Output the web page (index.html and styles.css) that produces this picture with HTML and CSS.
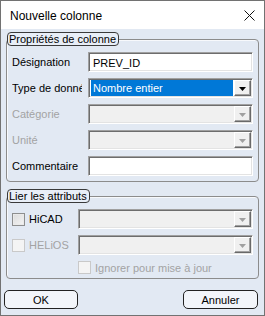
FILE: index.html
```html
<!DOCTYPE html>
<html>
<head>
<meta charset="utf-8">
<link rel="stylesheet" href="styles.css">
</head>
<body>
<div class="window">
  <div class="titlebar">
    <span class="title">Nouvelle colonne</span>
    <svg class="close" width="11" height="11" viewBox="0 0 11 11"><path d="M0.5 0.5L10.5 10.5M10.5 0.5L0.5 10.5" stroke="#111" stroke-width="1" fill="none"/></svg>
  </div>
  <div class="groups">
    <fieldset class="group g1">
      <legend>Propriétés de colonne</legend>
      <div class="rows">
        <div class="row">
          <span class="label">Désignation</span>
          <div class="field"><span class="value">PREV_ID</span></div>
        </div>
        <div class="row">
          <span class="label">Type de données</span>
          <div class="field combo"><span class="sel">Nombre entier</span><span class="dbtn"><svg width="7" height="4" viewBox="0 0 7 4"><path d="M0 0H7L3.5 4Z" fill="#000"/></svg></span></div>
        </div>
        <div class="row">
          <span class="label off">Catégorie</span>
          <div class="field combo off"><span class="sel"></span><span class="dbtn"><svg width="7" height="4" viewBox="0 0 7 4"><path d="M0 0H7L3.5 4Z" fill="#a0a0a0"/></svg></span></div>
        </div>
        <div class="row">
          <span class="label off">Unité</span>
          <div class="field combo off"><span class="sel"></span><span class="dbtn"><svg width="7" height="4" viewBox="0 0 7 4"><path d="M0 0H7L3.5 4Z" fill="#a0a0a0"/></svg></span></div>
        </div>
        <div class="row">
          <span class="label">Commentaire</span>
          <div class="field"><span class="value"></span></div>
        </div>
      </div>
    </fieldset>
    <fieldset class="group g2">
      <legend>Lier les attributs</legend>
      <div class="rows">
        <div class="row">
          <span class="check"><span class="box"></span><span class="ctext">HiCAD</span></span>
          <div class="field combo off"><span class="sel"></span><span class="dbtn"><svg width="7" height="4" viewBox="0 0 7 4"><path d="M0 0H7L3.5 4Z" fill="#a0a0a0"/></svg></span></div>
        </div>
        <div class="row">
          <span class="check off"><span class="box"></span><span class="ctext">HELiOS</span></span>
          <div class="field combo off"><span class="sel"></span><span class="dbtn"><svg width="7" height="4" viewBox="0 0 7 4"><path d="M0 0H7L3.5 4Z" fill="#a0a0a0"/></svg></span></div>
        </div>
        <div class="row small">
          <span class="check off ignore"><span class="box"></span><span class="ctext">Ignorer pour mise à jour</span></span>
        </div>
      </div>
    </fieldset>
  </div>
  <div class="buttons">
    <button class="btn ok">OK</button>
    <button class="btn cancel">Annuler</button>
  </div>
</div>
</body>
</html>
```

FILE: styles.css
```css
* { box-sizing: border-box; }
html, body { margin: 0; padding: 0; }
body {
  width: 265px;
  height: 316px;
  font-family: "Liberation Sans", Arial, sans-serif;
  font-size: 11px;
  color: #000;
  overflow: hidden;
}
.window {
  width: 265px;
  height: 316px;
  border: 1px solid #727272;
  background: #e2e9f3;
  display: flex;
  flex-direction: column;
}
.titlebar {
  height: 28px;
  background: #fff;
  display: flex;
  align-items: center;
  justify-content: space-between;
  padding: 0 9px 0 9px;
}
.title {
  font-size: 12px;
  line-height: 14px;
  padding-top: 1px;
}
.close { display: block; margin-top: 1px; }
.groups {
  padding: 3px 5px 0 5px;
  display: flex;
  flex-direction: column;
}
.group {
  margin: 0;
  padding: 0;
  border: 1px solid #8c8c8c;
  border-radius: 4px;
  box-shadow: inset 1px 1px 0 #f7f9fc;
  min-width: 0;
}
.g2 { margin-top: 7px; }
legend {
  margin: 0;
  padding: 0 2px 0 1px;
  height: 14px;
  line-height: 12px;
  border: 1px solid #3a3a3a;
  border-radius: 4px;
  background: #e8eef7;
  font-size: 11px;
}
.rows {
  display: flex;
  flex-direction: column;
  gap: 6px;
}
.g1 .rows { padding: 6px 5px 5px 5px; }
.g2 .rows { padding: 6px 5px 4px 5px; }
.row {
  display: flex;
  align-items: center;
  height: 20px;
}
.row.small { height: 13px; }
.label {
  width: 70px;
  margin-right: 6px;
  white-space: nowrap;
  overflow: hidden;
  line-height: 14px;
}
.off { color: #a3a3a3; }
.field {
  flex: 1;
  height: 20px;
  border: 1px solid;
  border-color: #a0a0a0 #ffffff #ffffff #a0a0a0;
  box-shadow: inset 1px 1px 0 #6d6d6d, inset -1px -1px 0 #e3e3e3;
  background: #fff;
  display: flex;
  align-items: stretch;
  padding: 1px;
}
.value {
  padding-left: 3px;
  line-height: 16px;
  padding-top: 1px;
}
.combo.off { background: #f0f0f0; }
.sel {
  flex: 1;
  margin: 0 1px 0 1px;
  padding-left: 2px;
  line-height: 16px;
}
.combo:not(.off) .sel {
  background: #0078d7;
  color: #fff;
}
.dbtn {
  width: 17px;
  background: #f0f0f0;
  border: 1px solid;
  border-color: #ffffff #696969 #696969 #ffffff;
  box-shadow: inset -1px -1px 0 #a0a0a0;
  display: flex;
  align-items: center;
  justify-content: center;
}
.dbtn svg { display: block; margin-top: 1px; }
.check {
  width: 66px;
  display: flex;
  align-items: center;
  white-space: nowrap;
}
.box {
  width: 13px;
  height: 13px;
  border: 1px solid #8e8f8f;
  background: linear-gradient(135deg, #dcdcdc, #f4f4f4);
  box-shadow: inset 0 0 0 1px #eaeaea;
  margin-right: 4px;
  flex: none;
}
.check.off .box {
  border-color: #c9c9c9;
  background: #f4f4f4;
  box-shadow: none;
}
.ctext { line-height: 14px; }
.ignore { margin-left: 66px; width: auto; }
.ignore .box { margin-right: 4px; }
.buttons {
  display: flex;
  justify-content: space-between;
  padding: 11px 6px 0 3px;
}
.btn {
  height: 19px;
  border: 1px solid #222;
  border-radius: 5px;
  background: #f2f5fa;
  font-family: "Liberation Sans", Arial, sans-serif;
  font-size: 11px;
  color: #000;
  padding: 0;
  line-height: 16px;
}
.ok { width: 74px; }
.cancel { width: 75px; }
```
